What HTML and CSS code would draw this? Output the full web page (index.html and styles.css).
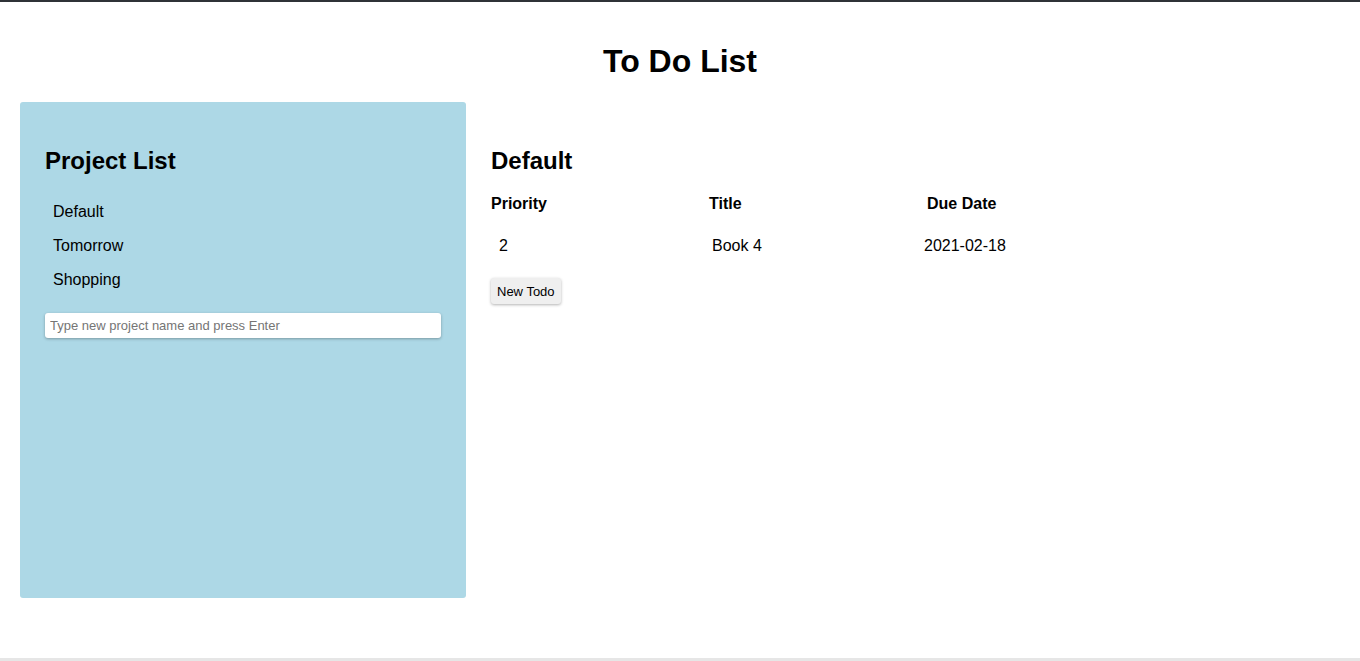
FILE: index.html
```html
<!DOCTYPE html>
<html>
<head>
<meta charset="utf-8">
<title>To Do List</title>
<link rel="stylesheet" href="styles.css">
</head>
<body>
<div class="page">
  <h1 class="app-title">To Do List</h1>
  <div class="layout">
    <aside class="sidebar">
      <h2 class="section-title">Project List</h2>
      <ul class="projects">
        <li class="project">Default</li>
        <li class="project">Tomorrow</li>
        <li class="project">Shopping</li>
      </ul>
      <input class="project-input" type="text" placeholder="Type new project name and press Enter">
    </aside>
    <main class="content">
      <h2 class="section-title">Default</h2>
      <div class="todo-row todo-head">
        <div class="cell c1">Priority</div>
        <div class="cell c2">Title</div>
        <div class="cell c3">Due Date</div>
      </div>
      <div class="todo-row todo-item">
        <div class="cell c1">2</div>
        <div class="cell c2">Book 4</div>
        <div class="cell c3">2021-02-18</div>
      </div>
      <button class="new-todo">New Todo</button>
    </main>
  </div>
</div>
</body>
</html>
```
FILE: styles.css
```css
html, body {
  margin: 0;
  padding: 0;
}
body {
  font-family: "Liberation Sans", Arial, sans-serif;
  color: #000;
  background: #fff;
}
.page {
  box-sizing: border-box;
  height: 661px;
  border-top: 2px solid #2f3337;
  border-bottom: 3px solid #e6e6e6;
  overflow: hidden;
}
.app-title {
  margin: 41px 0 22px;
  font-size: 32px;
  line-height: 37px;
  text-align: center;
  font-weight: bold;
}
.layout {
  display: flex;
  padding: 0 20px;
  gap: 25px;
}
.sidebar {
  width: 446px;
  height: 496px;
  box-sizing: border-box;
  background: #add8e6;
  border-radius: 3px;
  padding: 45px 25px 0;
}
.section-title {
  margin: 0;
  font-size: 24px;
  line-height: 28px;
  font-weight: bold;
}
.projects {
  list-style: none;
  margin: 20px 0 16px;
  padding: 0;
}
.project {
  padding: 8px 8px;
  font-size: 16px;
  line-height: 18px;
}
.project-input {
  display: block;
  box-sizing: border-box;
  width: 396px;
  height: 25px;
  margin: 0;
  padding: 0 5px;
  border: none;
  border-radius: 3px;
  background: #fff;
  box-shadow: 0 1px 3px rgba(0,0,0,0.3);
  font-family: "Liberation Sans", Arial, sans-serif;
  font-size: 13px;
}
.project-input::placeholder {
  color: #757575;
}
.content {
  flex: 1;
  padding-top: 45px;
}
.todo-row {
  display: grid;
  grid-template-columns: 218px 218px 218px;
  font-size: 16px;
  line-height: 18px;
}
.todo-head {
  margin-top: 20px;
  font-weight: bold;
}
.todo-item {
  margin-top: 24px;
}
.todo-item .c1 { padding-left: 8px; }
.todo-item .c2 { padding-left: 3px; }
.todo-item .c3 { margin-left: -3px; }
.new-todo {
  display: block;
  margin: 23px 0 0 0;
  height: 26px;
  padding: 0 6px;
  border: none;
  border-radius: 3px;
  background: #efefef;
  box-shadow: 0 1px 3px rgba(0,0,0,0.3);
  font-family: "Liberation Sans", Arial, sans-serif;
  font-size: 13px;
  color: #000;
}
```
